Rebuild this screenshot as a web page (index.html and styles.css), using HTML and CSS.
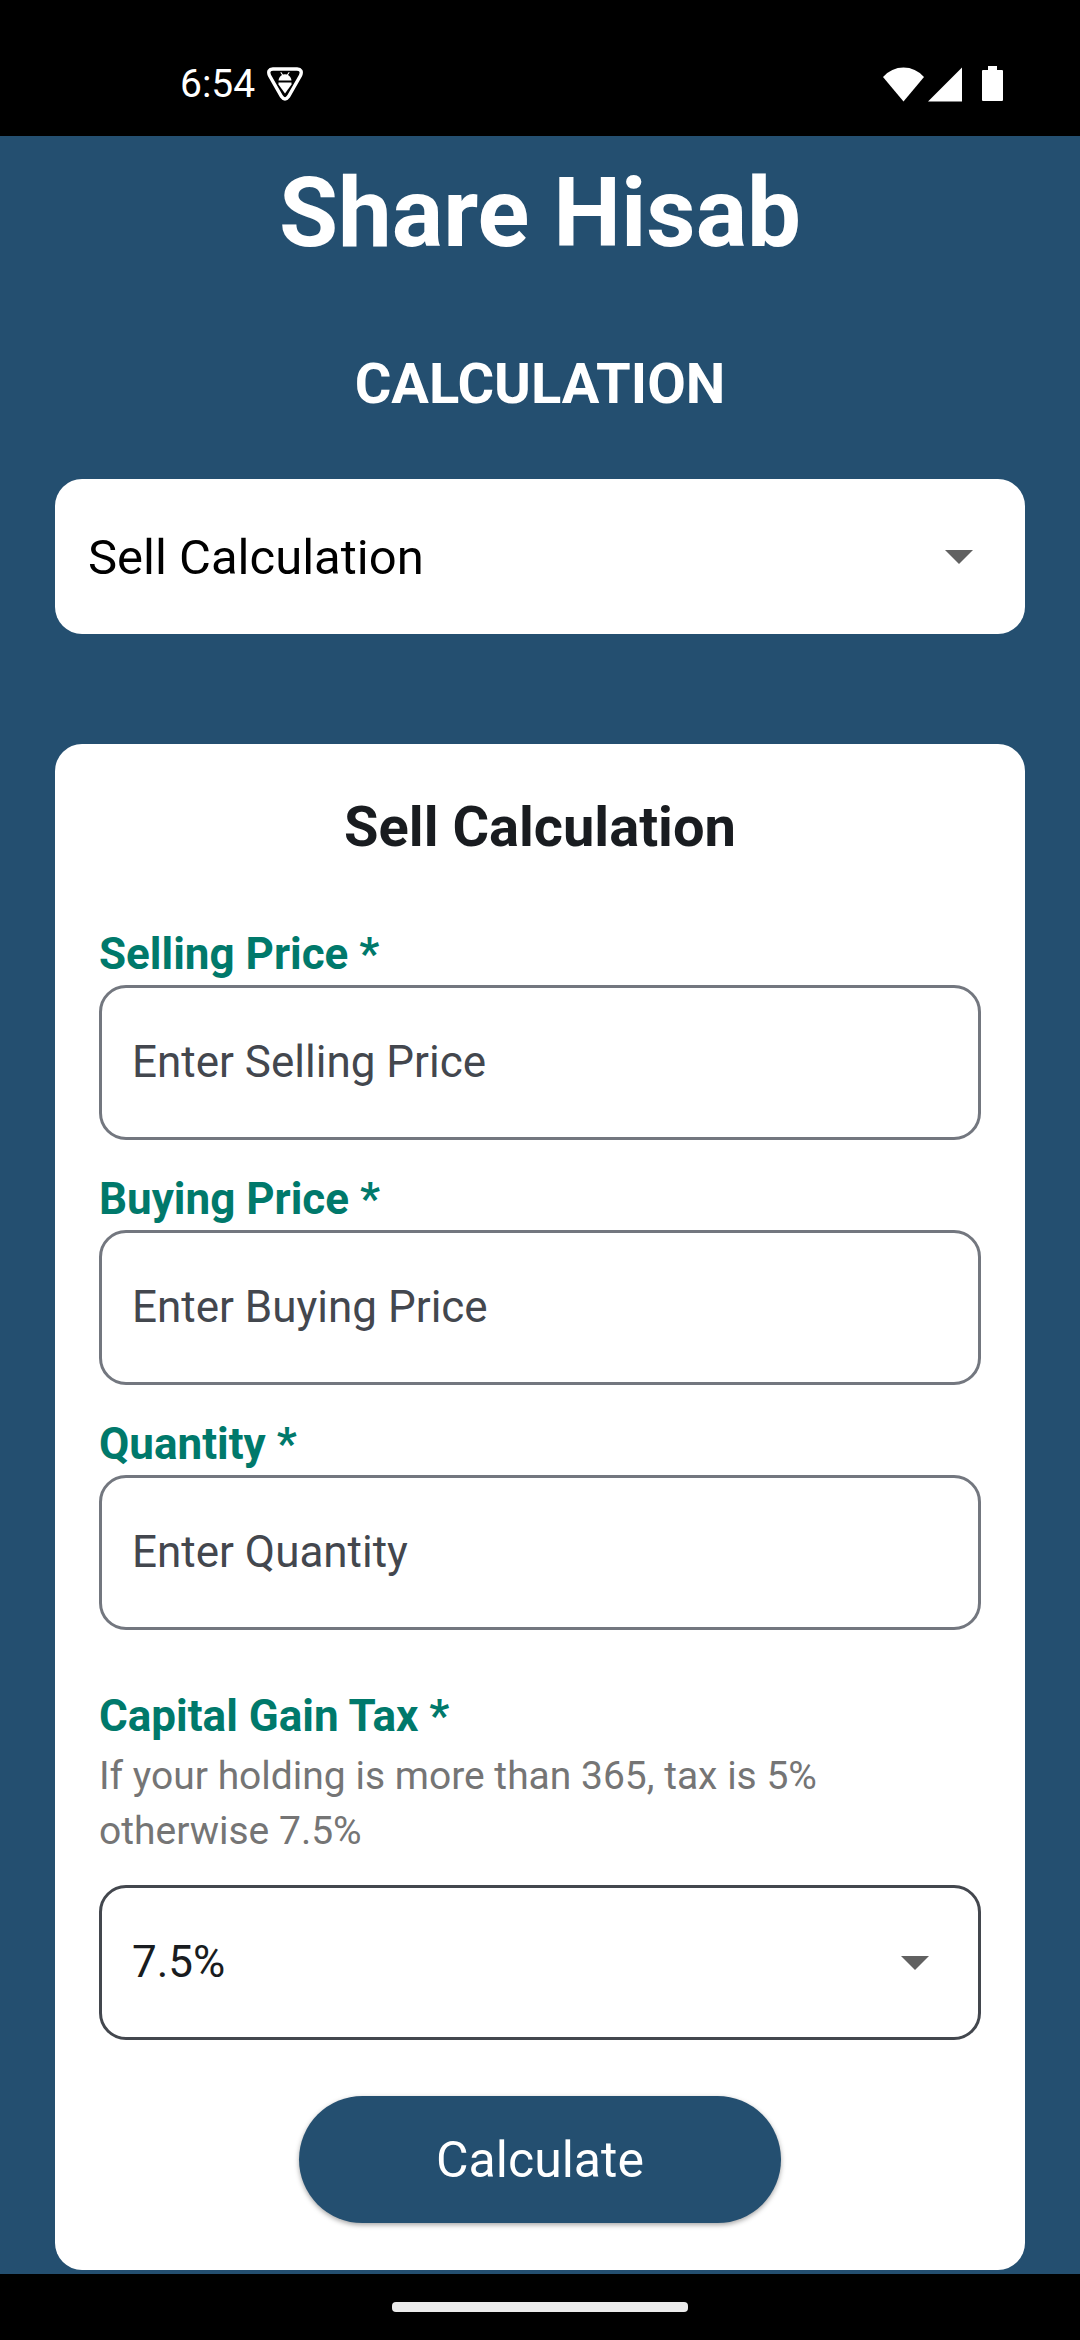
FILE: index.html
```html
<!DOCTYPE html>
<html lang="en">
<head>
  <meta charset="utf-8">
  <meta name="viewport" content="width=device-width, initial-scale=1">
  <title>Share Hisab</title>
  <link rel="stylesheet" href="styles.css">
</head>
<body>
  <header class="status-bar">
    <div class="status-group">
      <span>6:54</span>
      <svg class="status-debug" width="36" height="34" viewBox="0 0 36 34" aria-hidden="true">
        <path d="M6 2H30Q36 2.500 33.500 8.500L21.500 29.500Q18 34.500 14.500 29.500L2.500 8.500Q0 2.500 6 2Z" fill="none" stroke="#fff" stroke-width="3.400"/>
        <path d="M11.500 13.500Q12 9.500 15 8L13.300 5.500L14.200 5L16 7.500Q18 7 20 7.500L21.800 5L22.700 5.500L21 8Q24 9.500 24.500 13.500Z" fill="#fff"/>
        <path d="M11.500 15.500H24.500V17.500L18 26.500L11.500 17.500Z" fill="#fff"/>
      </svg>
    </div>
    <div class="status-group">
      <svg width="79" height="36" viewBox="0 0 79 36" aria-hidden="true">
        <path d="M0 11Q8.500 1.500 20.500 1.500T41 11L20.500 35.500Z" fill="#fff"/>
        <path d="M45 35.500L79 1.500V35.500Z" fill="#fff"/>
      </svg>
      <svg width="21" height="36" viewBox="0 0 21 36" aria-hidden="true">
        <path d="M6 0H15V4H20Q21 4 21 5V34Q21 35 20 35H1Q0 35 0 34V5Q0 4 1 4H6Z" fill="#fff"/>
      </svg>
    </div>
  </header>

  <main class="page">
    <h1 class="app-title">Share Hisab</h1>
    <h2 class="page-title" id="calculation-label">CALCULATION</h2>

    <div class="dropdown dropdown-main">
      <select class="dropdown-control" aria-labelledby="calculation-label">
        <option>Sell Calculation</option>
        <option>Buy Calculation</option>
      </select>
      <svg class="dropdown-arrow" width="28" height="14" viewBox="0 0 28 14" aria-hidden="true"><path d="M0 0H28L14 14Z" fill="#616161"/></svg>
    </div>

    <form class="card">
      <h3 class="card-title">Sell Calculation</h3>

      <div class="fields">
        <div class="field">
          <label class="label" for="selling-price">Selling Price *</label>
          <input class="input" id="selling-price" type="text" inputmode="decimal" placeholder="Enter Selling Price">
        </div>
        <div class="field">
          <label class="label" for="buying-price">Buying Price *</label>
          <input class="input" id="buying-price" type="text" inputmode="decimal" placeholder="Enter Buying Price">
        </div>
        <div class="field">
          <label class="label" for="quantity">Quantity *</label>
          <input class="input" id="quantity" type="text" inputmode="numeric" placeholder="Enter Quantity">
        </div>
      </div>

      <div class="field tax-field">
        <label class="label" for="tax">Capital Gain Tax *</label>
        <p class="hint" id="tax-hint">If your holding is more than 365, tax is 5% otherwise 7.5%</p>
        <div class="dropdown dropdown-outlined">
          <select class="dropdown-control" id="tax" aria-describedby="tax-hint">
            <option>7.5%</option>
            <option>5%</option>
          </select>
          <svg class="dropdown-arrow" width="28" height="14" viewBox="0 0 28 14" aria-hidden="true"><path d="M0 0H28L14 14Z" fill="#616161"/></svg>
        </div>
      </div>

      <button class="submit" type="button">Calculate</button>
    </form>
  </main>

  <footer class="nav-bar"><span class="nav-handle"></span></footer>
</body>
</html>
```
FILE: styles.css
```css
*,
*::before,
*::after {
  box-sizing: border-box;
}

body {
  display: flex;
  flex-direction: column;
  min-height: 100vh;
  margin: 0;
  background: #244f70;
  color: #191c20;
  font-family: Roboto, sans-serif;
}

h1,
h2,
h3,
p {
  margin: 0;
}

.status-bar {
  display: flex;
  justify-content: space-between;
  height: 136px;
  padding: 62px 77px 30px 180px;
  background: #000;
  color: #fff;
  font-size: 39px;
  line-height: 44px;
}

.status-group {
  display: flex;
  align-items: center;
  gap: 20px;
}

.status-group:first-child {
  gap: 12px;
}

.page {
  display: flex;
  flex: 1;
  flex-direction: column;
  padding: 21px 55px 4px;
}

.app-title {
  color: #fff;
  font-size: 96px;
  line-height: 112px;
  text-align: center;
}

.page-title {
  margin-top: 83px;
  color: #fff;
  font-size: 56px;
  line-height: 64px;
  text-align: center;
}

.dropdown {
  display: grid;
  align-items: center;
  border-radius: 27px;
  background: #fff;
}

.dropdown-control,
.dropdown-arrow {
  grid-area: 1 / 1;
}

.dropdown-control {
  width: 100%;
  height: 155px;
  border: 0;
  border-radius: 27px;
  background: none;
  appearance: none;
  font-family: inherit;
}

.dropdown-arrow {
  justify-self: end;
  margin-right: 52px;
  pointer-events: none;
}

.dropdown-main {
  margin-top: 63px;
}

.dropdown-main .dropdown-control {
  padding: 2px 33px 0;
  color: #000;
  font-size: 49px;
}

.dropdown-outlined {
  margin-top: 26px;
}

.dropdown-outlined .dropdown-control {
  padding: 0 30px 2px;
  border: 3px solid #43474e;
  color: #191c20;
  font-size: 44px;
}

.card {
  display: flex;
  flex-direction: column;
  margin-top: 110px;
  padding: 51px 44px 47px;
  border-radius: 27px;
  background: #fff;
}

.card-title {
  font-size: 56px;
  line-height: 64px;
  text-align: center;
}

.fields {
  display: flex;
  flex-direction: column;
  gap: 33px;
  margin-top: 69px;
}

.field {
  display: flex;
  flex-direction: column;
}

.label {
  color: #00796b;
  font-size: 44px;
  font-weight: 700;
  line-height: 52px;
}

.input {
  width: 100%;
  height: 155px;
  margin-top: 5px;
  padding: 0 30px 2px;
  border: 3px solid #73777f;
  border-radius: 27px;
  background: #fff;
  color: #191c20;
  font-family: inherit;
  font-size: 44px;
}

.input::placeholder {
  color: #43474e;
  opacity: 1;
}

.tax-field {
  margin-top: 60px;
}

.hint {
  margin-top: 7px;
  color: #757575;
  font-size: 39px;
  line-height: 55px;
}

.submit {
  align-self: center;
  height: 127px;
  margin-top: 56px;
  padding: 0 137px;
  border: 0;
  border-radius: 64px;
  background: #244f70;
  box-shadow: 0 2px 5px rgba(0, 0, 0, 0.35);
  color: #fff;
  font-family: inherit;
  font-size: 50px;
}

.nav-bar {
  display: flex;
  justify-content: center;
  height: 66px;
  padding-top: 28px;
  background: #000;
}

.nav-handle {
  width: 296px;
  height: 10px;
  border-radius: 4px;
  background: #ebebeb;
}
```
